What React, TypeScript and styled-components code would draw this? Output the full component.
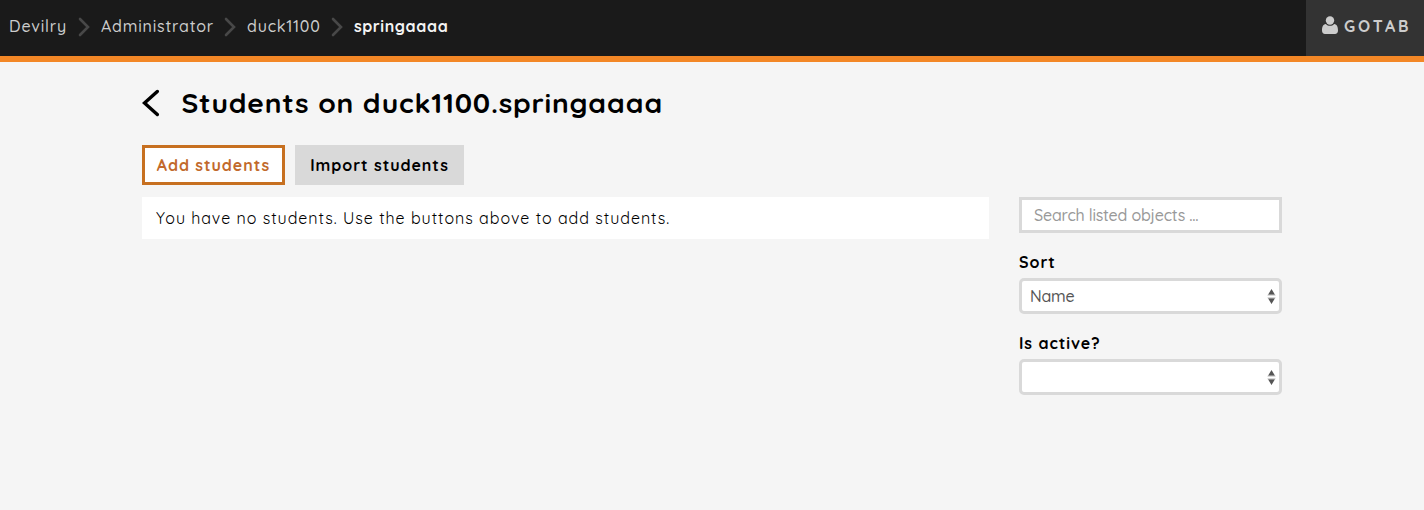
import React from "react";
import styled, { createGlobalStyle } from "styled-components";

const GlobalStyle = createGlobalStyle`
  * { box-sizing: border-box; }
  body {
    margin: 0;
    min-height: 510px;
    background: #f5f5f5;
    color: #000;
    font-family: Quicksand, Lato, "Open Sans", sans-serif;
    font-size: 16px;
    line-height: 24px;
  }
`;

const TopBar = styled.header`
  display: flex;
  justify-content: space-between;
  height: 62px;
  background: #1a1a1a;
  border-bottom: 6px solid #f38726;
`;

const Breadcrumb = styled.nav`
  display: flex;
  align-items: center;
  padding: 0 0 4px 9px;
`;

const Crumb = styled.a<{ $width: number; $spacing: number; $active?: boolean }>`
  width: ${(p) => p.$width}px;
  white-space: nowrap;
  color: ${(p) => (p.$active ? "#f4f4f4" : "#cccccc")};
  font-weight: ${(p) => (p.$active ? 700 : 500)};
  letter-spacing: ${(p) => p.$spacing}px;
`;

const Separator = styled.svg`
  width: 12px;
  height: 20px;
  margin: 2px 11px 0;
  fill: none;
  stroke: #484848;
  stroke-width: 2.6;
  stroke-linecap: round;
`;

const UserButton = styled.a`
  display: flex;
  align-items: center;
  width: 118px;
  padding: 0 0 4px 16px;
  background: #333;
  color: #ccc;
  font-weight: 700;
  letter-spacing: 2.9px;
`;

const UserIcon = styled.svg`
  width: 16px;
  height: 18px;
  margin: 0 6px 2px 0;
  fill: #ccc;
`;

const Page = styled.main`
  width: 1140px;
  margin: 0 auto;
  padding-top: 21px;
`;

const TitleRow = styled.div`
  display: flex;
  align-items: center;
  height: 40px;
`;

const BackIcon = styled.svg`
  width: 18px;
  height: 28px;
  margin-right: 21.5px;
  fill: none;
  stroke: #000;
  stroke-width: 3.4;
  stroke-linecap: round;
`;

const Title = styled.h1`
  margin: 0;
  font-size: 28.2px;
  line-height: 40px;
  font-weight: 700;
  letter-spacing: 0.78px;
  white-space: nowrap;
`;

const Actions = styled.div`
  display: flex;
  gap: 10px;
  margin-top: 22px;
`;

const Button = styled.button<{ $width: number; $primary?: boolean }>`
  width: ${(p) => p.$width}px;
  height: 40px;
  padding: 0;
  border: 3px solid ${(p) => (p.$primary ? "#c77020" : "#d9d9d9")};
  background: ${(p) => (p.$primary ? "#fff" : "#d9d9d9")};
  color: ${(p) => (p.$primary ? "#c26a2c" : "#000")};
  font: 700 16px/24px Quicksand, Lato, sans-serif;
  letter-spacing: 0.95px;
  white-space: nowrap;
`;

const Columns = styled.div`
  display: grid;
  grid-template-columns: 847px 263px;
  gap: 30px;
  align-items: start;
  margin-top: 12px;
`;

const Message = styled.p`
  margin: 0;
  height: 42px;
  padding: 9px 14px;
  background: #fff;
  font-weight: 400;
  letter-spacing: 0.97px;
  white-space: nowrap;
`;

const Search = styled.input`
  display: block;
  width: 100%;
  height: 36px;
  padding: 0 12px;
  border: 3px solid #d9d9d9;
  border-radius: 0;
  background: #fff;
  font: 500 16px/24px Quicksand, Lato, sans-serif;
  letter-spacing: -0.21px;
  &::placeholder { color: #999; opacity: 1; }
`;

const Label = styled.div`
  height: 24px;
  margin: 17px 0 4px;
  font-weight: 700;
  letter-spacing: 0.95px;
`;

const SelectBox = styled.div`
  display: flex;
  align-items: center;
  justify-content: space-between;
  height: 36px;
  padding: 0 3px 0 8px;
  border: 3px solid #d9d9d9;
  border-radius: 5px;
  background: #fff;
  color: #555;
  font-weight: 500;
  letter-spacing: -0.2px;
`;

const Arrows = styled.svg`
  width: 9px;
  height: 15px;
  fill: #555;
`;

const SelectArrows = () => (
  <Arrows viewBox="0 0 9 15">
    <path d="M4.5 0 8 5.8H1Z M1 9.2H8L4.5 15Z" />
    <path d="M.5 6.2h8M.5 8.8h8" stroke="#bbb" strokeWidth=".8" />
  </Arrows>
);

const Chevron = () => (
  <Separator viewBox="0 0 12 20">
    <path d="M2 2 10 10 2 18" />
  </Separator>
);

export default function App() {
  return (
    <>
      <GlobalStyle />
      <TopBar>
        <Breadcrumb>
          <Crumb $width={58} $spacing={0.8}>Devilry</Crumb>
          <Chevron />
          <Crumb $width={112} $spacing={0.8}>Administrator</Crumb>
          <Chevron />
          <Crumb $width={73} $spacing={0.75}>duck1100</Crumb>
          <Chevron />
          <Crumb $width={95} $spacing={0.55} $active>springaaaa</Crumb>
        </Breadcrumb>
        <UserButton>
          <UserIcon viewBox="0 0 16 18">
            <circle cx="8" cy="4.5" r="4.2" />
            <path d="M3.7 8C5 9.4 6.3 9.8 8 9.8S11 9.4 12.3 8C15 8.3 16 11 16 14.5 16 16.8 14.8 18 13 18H3C1.200 18 0 16.800 0 14.500 0 11 1 8.300 3.700 8Z" />
          </UserIcon>
          GOTAB
        </UserButton>
      </TopBar>
      <Page>
        <TitleRow>
          <BackIcon viewBox="0 0 18 28">
            <path d="M15.300 2.500 2.500 14 15.300 25.500" />
          </BackIcon>
          <Title>Students on duck1100.springaaaa</Title>
        </TitleRow>
        <Actions>
          <Button $width={143} $primary>Add students</Button>
          <Button $width={169}>Import students</Button>
        </Actions>
        <Columns>
          <Message>You have no students. Use the buttons above to add students.</Message>
          <aside>
            <Search placeholder="Search listed objects ..." />
            <Label>Sort</Label>
            <SelectBox>Name<SelectArrows /></SelectBox>
            <Label>Is active?</Label>
            <SelectBox><span /><SelectArrows /></SelectBox>
          </aside>
        </Columns>
      </Page>
    </>
  );
}
